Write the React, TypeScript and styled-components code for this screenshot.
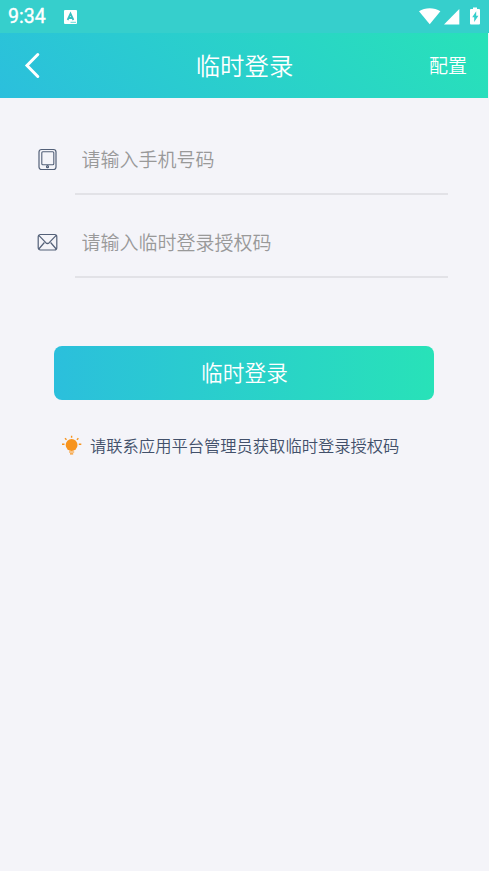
import React from 'react';
import styled, { createGlobalStyle } from 'styled-components';

const GlobalStyle = createGlobalStyle`
  * { box-sizing: border-box; }
  body { margin: 0; background: #f4f4f9; }
  svg { display: block; flex: none; }
`;

const Screen = styled.div`
  min-height: 871px;
  background: #f4f4f9;
  font-family: 'Noto Sans CJK SC', sans-serif;
  font-weight: 350;
`;

const StatusBar = styled.div`
  display: flex;
  align-items: center;
  height: 33px;
  padding: 0 8px;
  background: #36cfcc;
  color: #fff;
`;

const Clock = styled.time`
  width: 56px;
  padding-top: 1px;
  font: 400 19.5px/34px Roboto, sans-serif;
  -webkit-text-stroke: 0.35px #fff;
`;

const StatusIcons = styled.div`
  display: flex;
  align-items: center;
  margin-left: auto;
`;

const NavBar = styled.header`
  display: grid;
  grid-template-columns: 120px 1fr 120px;
  align-items: center;
  width: 488px;
  height: 65px;
  padding: 0 21px 2px 22px;
  background: linear-gradient(45deg, #2bbfdd 0%, #28e2b8 100%);
  color: #fff;
`;

const BackButton = styled.button`
  padding: 0;
  border: 0;
  background: none;
  color: inherit;
`;

const Title = styled.h1`
  margin: 0;
  font-size: 24.4px;
  line-height: 63px;
  font-weight: inherit;
  text-align: center;
  white-space: nowrap;
`;

const ConfigLink = styled.span`
  font-size: 19px;
  line-height: 63px;
  text-align: right;
`;

const Form = styled.form`
  padding: 14px 41px 0 34px;
`;

const Field = styled.label`
  display: grid;
  grid-template-columns: 41px 1fr;
  height: 83px;
`;

const FieldIcon = styled.span`
  padding-top: 34px;
`;

const Input = styled.input`
  width: 100%;
  height: 83px;
  padding: 12px 6.5px 0;
  border: 0;
  border-bottom: 2px solid #e2e2e7;
  outline: 0;
  background: none;
  font: 350 19px 'Noto Sans CJK SC', sans-serif;
  color: #42506a;
  &::placeholder { color: #999; opacity: 1; }
`;

const SubmitButton = styled.button`
  display: block;
  width: 380px;
  height: 54px;
  margin: 68px 0 0 20px;
  padding: 0 0 2px 1px;
  border: 0;
  border-radius: 8px;
  background: linear-gradient(90deg, #2bbfdc, #28e2b8);
  color: #fff;
  font: 350 21.7px/52px 'Noto Sans CJK SC', sans-serif;
`;

const Hint = styled.p`
  display: flex;
  align-items: center;
  gap: 8px;
  margin: 32px 0 0 27px;
  color: #42506a;
  font-size: 16.3px;
  line-height: 26px;
  white-space: nowrap;
`;

const KeyboardIcon = () => (
  <svg width="13" height="14" viewBox="0 0 13 14">
    <rect width="13" height="14" rx="1" fill="#fff" />
    <path d="M3.6 10 6.5 3.7 9.4 10M4.8 8h3.5" fill="none" stroke="#38bfc2" strokeWidth="1.8" />
    <path d="M6.5 12.3h5.5" stroke="#38cfcc" strokeWidth=".8" />
  </svg>
);

const SignalIcons = () => (
  <svg width="64" height="20" viewBox="0 0 64 20" fill="#fff">
    <path d="M2 4.3C8 .2 17.4 .2 23.4 4.3L12.7 17.2Z" />
    <path d="M42.3 2v15.5H27Z" />
    <path
      fillRule="evenodd"
      d="M56 .5h4v1.400h2q1 0 1 1v13.600q0 1-1 1h-8q-1 0-1-1V2.900q0-1 1-1h2ZM59.200 4.200 55.200 10.300h2v4.800l4.200-6.300h-2.200Z"
    />
  </svg>
);

const ChevronIcon = () => (
  <svg width="20" height="28" viewBox="0 0 20 28">
    <path d="m15.800 3.500-10.800 11 10.800 11" fill="none" stroke="#fff" strokeWidth="3" strokeLinecap="round" strokeLinejoin="miter" />
  </svg>
);

const PhoneIcon = () => (
  <svg width="28" height="26" viewBox="0 0 28 26" fill="none" stroke="#536078">
    <rect x="5" y="3.500" width="17" height="20" rx="2.500" strokeWidth="1.200" />
    <rect x="7.800" y="5.700" width="12" height="13" rx="1" strokeWidth="1.100" />
    <circle cx="13.500" cy="20.700" r="1" strokeWidth="1.200" />
  </svg>
);

const MailIcon = () => (
  <svg width="28" height="26" viewBox="0 0 28 26" fill="none" stroke="#536078" strokeWidth="1.200">
    <rect x="4.200" y="5.500" width="18.600" height="15.500" rx="2.200" />
    <path d="m4.800 6.300 7 7.400q1.700 1.600 3.400 0l7-7.400M4.800 20l5.600-6.500M22.200 20l-5.600-6.500" />
  </svg>
);

const BulbIcon = () => (
  <svg width="21" height="22" viewBox="0 0 21 22" fill="none" stroke="#f7941e" strokeWidth="1.400">
    <circle cx="10.600" cy="11" r="5.900" fill="#f7941e" stroke="none" />
    <path d="M10.600 1.800v2M4 4.300l1.500 1.500M17.400 4.300l-1.500 1.500M1 10.300h2.500M17.800 10.300h2.500" />
    <path d="M8 18h5.200M9 19.800h3.200" strokeWidth="1.200" />
  </svg>
);

export default function App() {
  return (
    <Screen>
      <GlobalStyle />
      <StatusBar>
        <Clock>9:34</Clock>
        <KeyboardIcon />
        <StatusIcons><SignalIcons /></StatusIcons>
      </StatusBar>
      <NavBar>
        <BackButton type="button" aria-label="返回"><ChevronIcon /></BackButton>
        <Title>临时登录</Title>
        <ConfigLink>配置</ConfigLink>
      </NavBar>
      <Form>
        <Field>
          <FieldIcon><PhoneIcon /></FieldIcon>
          <Input placeholder="请输入手机号码" />
        </Field>
        <Field>
          <FieldIcon><MailIcon /></FieldIcon>
          <Input placeholder="请输入临时登录授权码" />
        </Field>
        <SubmitButton type="button">临时登录</SubmitButton>
        <Hint><BulbIcon />请联系应用平台管理员获取临时登录授权码</Hint>
      </Form>
    </Screen>
  );
}
